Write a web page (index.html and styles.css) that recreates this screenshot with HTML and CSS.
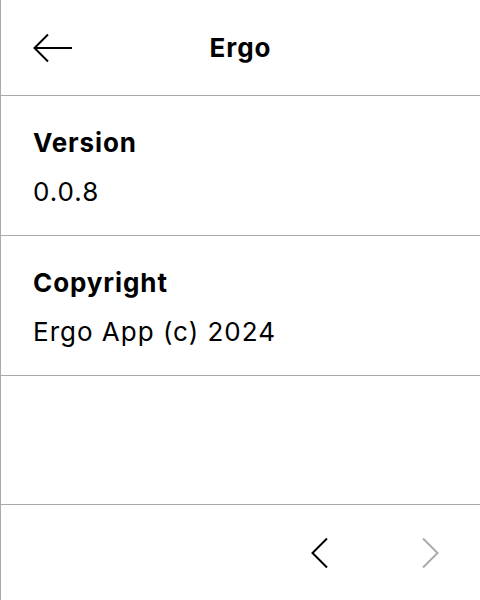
FILE: index.html
```html
<!DOCTYPE html>
<html>
<head>
<meta charset="utf-8">
<link rel="stylesheet" href="styles.css">
</head>
<body>
<div class="screen">
  <header class="header">
    <button class="back" aria-label="Back">
      <svg width="40" height="30" viewBox="0 0 40 30"><path d="M39 15H2M15 1.5L1.5 15L15 28.5" fill="none" stroke="#000" stroke-width="2"/></svg>
    </button>
    <h1 class="title">Ergo</h1>
  </header>
  <section class="item">
    <div class="label">Version</div>
    <div class="value">0.0.8</div>
  </section>
  <section class="item">
    <div class="label">Copyright</div>
    <div class="value">Ergo App (c) 2024</div>
  </section>
  <div class="spacer"></div>
  <footer class="footer">
    <button class="nav prev" aria-label="Previous">
      <svg width="20" height="32" viewBox="0 0 20 32"><path d="M17 1.5L2.5 16L17 30.5" fill="none" stroke="#000" stroke-width="2"/></svg>
    </button>
    <button class="nav next" aria-label="Next">
      <svg width="20" height="32" viewBox="0 0 20 32"><path d="M3 1.5L17.5 16L3 30.5" fill="none" stroke="#aaa" stroke-width="2"/></svg>
    </button>
  </footer>
</div>
</body>
</html>
```
FILE: styles.css
```css
* { box-sizing: border-box; }
html, body { margin: 0; padding: 0; background: #fff; }
body { font-family: Inter, "Noto Sans", sans-serif; color: #000; }
.screen {
  width: 480px;
  height: 600px;
  border-left: 1px solid #aaa;
  display: flex;
  flex-direction: column;
}
.header {
  height: 96px;
  border-bottom: 1px solid #aaa;
  display: flex;
  align-items: center;
  position: relative;
}
.back {
  border: 0; background: none; padding: 0;
  margin-left: 32px;
  width: 40px; height: 30px;
  display: flex;
}
.title {
  position: absolute;
  left: 0; right: 0;
  text-align: center;
  margin: 0;
  font-size: 26px;
  font-weight: 700;
  letter-spacing: 1px;
  pointer-events: none;
}
.item {
  height: 140px;
  border-bottom: 1px solid #aaa;
  padding: 31px 32px 0;
}
.label {
  font-size: 26px;
  font-weight: 700;
  line-height: 32px;
  letter-spacing: 0.9px;
}
.value {
  font-size: 26px;
  font-weight: 400;
  line-height: 32px;
  margin-top: 17px;
  letter-spacing: 1px;
}
.spacer {
  height: 129px;
  border-bottom: 1px solid #aaa;
}
.footer {
  flex: 1;
  display: flex;
  align-items: center;
  justify-content: flex-end;
  padding-right: 40px;
  gap: 90px;
}
.nav {
  border: 0; background: none; padding: 0;
  width: 20px; height: 32px;
  display: flex;
}
```
